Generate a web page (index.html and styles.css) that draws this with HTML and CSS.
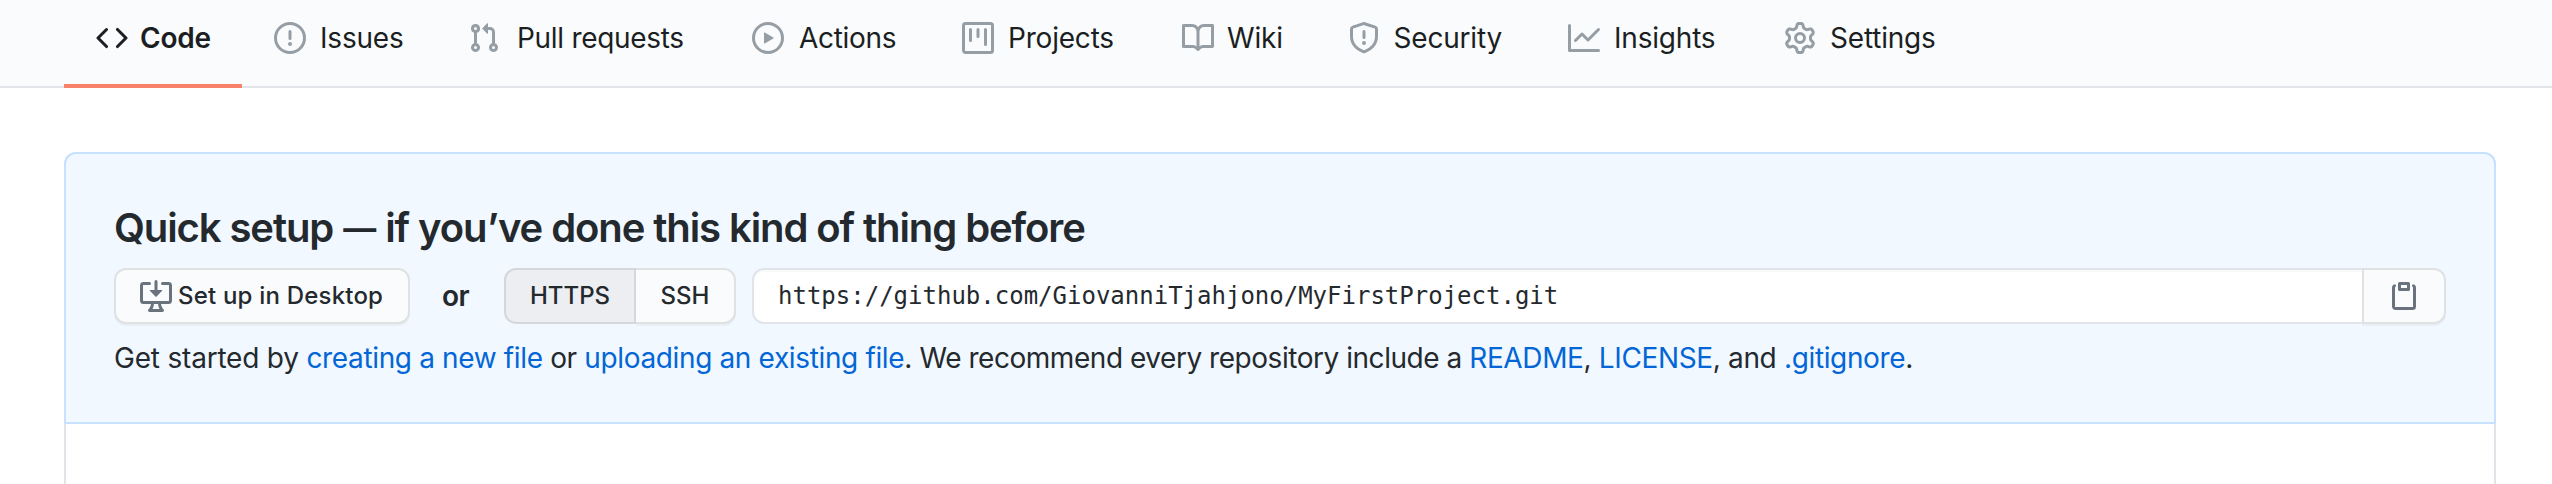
FILE: index.html
```html
<!DOCTYPE html>
<html lang="en">
<head>
<meta charset="utf-8">
<title>Quick setup</title>
<link rel="stylesheet" href="styles.css">
</head>
<body>
<nav class="tabs">
  <a class="tab tab-code selected"><svg class="icon" viewBox="0 0 16 16"><path fill-rule="evenodd" d="M4.72 3.22a.75.75 0 011.06 1.06L2.06 8l3.72 3.72a.75.75 0 11-1.06 1.06L.47 8.53a.75.75 0 010-1.06l4.25-4.25zm6.56 0a.75.75 0 10-1.06 1.06L13.94 8l-3.72 3.72a.75.75 0 101.06 1.06l4.25-4.25a.75.75 0 000-1.06l-4.25-4.25z"/></svg><span class="label">Code</span></a>
  <a class="tab tab-issues"><svg class="icon" viewBox="0 0 16 16"><path fill-rule="evenodd" d="M8 1.5a6.5 6.5 0 100 13 6.5 6.5 0 000-13zM0 8a8 8 0 1116 0A8 8 0 010 8zm9 3a1 1 0 11-2 0 1 1 0 012 0zm-.25-6.25a.75.75 0 00-1.5 0v3.5a.75.75 0 001.5 0v-3.5z"/></svg><span class="label">Issues</span></a>
  <a class="tab tab-pulls"><svg class="icon" viewBox="0 0 16 16"><path fill-rule="evenodd" d="M7.177 3.073L9.573.677A.25.25 0 0110 .854v4.792a.25.25 0 01-.427.177L7.177 3.427a.25.25 0 010-.354zM3.75 2.5a.75.75 0 100 1.5.75.75 0 000-1.5zm-2.25.75a2.25 2.25 0 113 2.122v5.256a2.251 2.251 0 11-1.5 0V5.372A2.25 2.25 0 011.5 3.25zM11 2.5h-1V4h1a1 1 0 011 1v5.628a2.251 2.251 0 101.5 0V5A2.5 2.5 0 0011 2.5zm1 10.25a.75.75 0 111.5 0 .75.75 0 01-1.5 0zM3.75 12a.75.75 0 100 1.5.75.75 0 000-1.5z"/></svg><span class="label">Pull requests</span></a>
  <a class="tab tab-actions"><svg class="icon" viewBox="0 0 16 16"><path fill-rule="evenodd" d="M1.5 8a6.5 6.5 0 1113 0 6.5 6.5 0 01-13 0zM8 0a8 8 0 100 16A8 8 0 008 0zM6.379 5.227A.25.25 0 006 5.442v5.117a.25.25 0 00.379.214l4.264-2.559a.25.25 0 000-.428L6.379 5.227z"/></svg><span class="label">Actions</span></a>
  <a class="tab tab-projects"><svg class="icon" viewBox="0 0 16 16"><path fill-rule="evenodd" d="M1.75 0A1.75 1.75 0 000 1.75v12.5C0 15.216.784 16 1.75 16h12.5A1.75 1.75 0 0016 14.25V1.75A1.75 1.75 0 0014.25 0H1.75zM1.5 1.75a.25.25 0 01.25-.25h12.5a.25.25 0 01.25.25v12.5a.25.25 0 01-.25.25H1.75a.25.25 0 01-.25-.25V1.75zM11.75 3a.75.75 0 00-.75.75v7.5a.75.75 0 001.5 0v-7.5a.75.75 0 00-.75-.75zm-8.25.75a.75.75 0 011.5 0v5.5a.75.75 0 01-1.5 0v-5.5zM8 3a.75.75 0 00-.75.75v3.5a.75.75 0 001.5 0v-3.5A.75.75 0 008 3z"/></svg><span class="label">Projects</span></a>
  <a class="tab tab-wiki"><svg class="icon" viewBox="0 0 16 16"><path fill-rule="evenodd" d="M0 1.75A.75.75 0 01.75 1h4.253c1.227 0 2.317.59 3 1.501A3.744 3.744 0 0111.006 1h4.245a.75.75 0 01.75.75v10.5a.75.75 0 01-.75.75h-4.507a2.25 2.25 0 00-1.591.659l-.622.621a.75.75 0 01-1.06 0l-.622-.621A2.25 2.25 0 005.258 13H.75a.75.75 0 01-.75-.75V1.75zm8.755 3a2.25 2.25 0 012.25-2.25H14.5v9h-3.757c-.71 0-1.4.201-1.992.572l.004-7.322zm-1.504 7.324l.004-5.073-.002-2.253A2.25 2.25 0 005.003 2.5H1.5v9h3.757a3.75 3.75 0 011.994.574z"/></svg><span class="label">Wiki</span></a>
  <a class="tab tab-security"><svg class="icon" viewBox="0 0 16 16"><path fill-rule="evenodd" d="M7.467.133a1.75 1.75 0 011.066 0l5.25 1.68A1.75 1.75 0 0115 3.48V7c0 1.566-.32 3.182-1.303 4.682-.983 1.498-2.585 2.813-5.032 3.855a1.7 1.7 0 01-1.33 0c-2.447-1.042-4.049-2.357-5.032-3.855C1.32 10.182 1 8.566 1 7V3.48a1.75 1.75 0 011.217-1.667l5.25-1.68zm.61 1.429a.25.25 0 00-.153 0l-5.25 1.68a.25.25 0 00-.174.238V7c0 1.358.275 2.666 1.057 3.86.784 1.194 2.121 2.34 4.366 3.297a.2.2 0 00.154 0c2.245-.956 3.582-2.104 4.366-3.298C13.225 9.666 13.5 8.36 13.5 7V3.48a.25.25 0 00-.174-.237l-5.25-1.68zM9 10.5a1 1 0 11-2 0 1 1 0 012 0zm-.25-5.75a.75.75 0 10-1.5 0v3a.75.75 0 001.5 0v-3z"/></svg><span class="label">Security</span></a>
  <a class="tab tab-insights"><svg class="icon" viewBox="0 0 16 16"><path fill-rule="evenodd" d="M1.5 1.75a.75.75 0 00-1.5 0v12.5c0 .414.336.75.75.75h14.5a.75.75 0 000-1.5H1.5V1.75zm14.28 2.53a.75.75 0 00-1.06-1.06L10 7.94 7.53 5.47a.75.75 0 00-1.06 0L3.22 8.72a.75.75 0 001.06 1.06L7 7.06l2.47 2.47a.75.75 0 001.06 0l5.25-5.25z"/></svg><span class="label">Insights</span></a>
  <a class="tab tab-settings"><svg class="icon" viewBox="0 0 16 16"><path fill-rule="evenodd" d="M7.429 1.525a6.593 6.593 0 011.142 0c.036.003.108.036.137.146l.289 1.105c.147.56.55.967.997 1.189.174.086.341.183.501.29.417.278.97.423 1.53.27l1.102-.303c.11-.03.175.016.195.046.219.31.41.641.573.989.014.031.022.11-.059.19l-.815.806c-.411.406-.562.957-.53 1.456a4.588 4.588 0 010 .582c-.032.499.119 1.05.53 1.456l.815.806c.08.08.073.159.059.19a6.494 6.494 0 01-.573.99c-.02.029-.086.074-.195.045l-1.103-.303c-.559-.153-1.112-.008-1.529.27-.16.107-.327.204-.5.29-.449.222-.851.628-.998 1.189l-.289 1.105c-.029.11-.101.143-.137.146a6.613 6.613 0 01-1.142 0c-.036-.003-.108-.037-.137-.146l-.289-1.105c-.147-.56-.55-.967-.997-1.189a4.502 4.502 0 01-.501-.29c-.417-.278-.97-.423-1.53-.27l-1.102.303c-.11.03-.175-.016-.195-.046a6.492 6.492 0 01-.573-.989c-.014-.031-.022-.11.059-.19l.815-.806c.411-.406.562-.957.53-1.456a4.587 4.587 0 010-.582c.032-.499-.119-1.05-.53-1.456l-.815-.806c-.08-.08-.073-.159-.059-.19a6.44 6.44 0 01.573-.99c.02-.029.086-.075.195-.045l1.103.303c.559.153 1.112.008 1.529-.27.16-.107.327-.204.5-.29.449-.222.851-.628.998-1.189l.289-1.105c.029-.11.101-.143.137-.146zM8 0c-.236 0-.47.01-.701.03-.743.065-1.29.615-1.458 1.261l-.29 1.106c-.017.066-.078.158-.211.224a5.994 5.994 0 00-.668.386c-.123.082-.233.09-.3.071L3.27 2.776c-.644-.177-1.392.02-1.82.63a7.977 7.977 0 00-.704 1.217c-.315.675-.111 1.422.363 1.891l.815.806c.05.048.098.147.088.294a6.084 6.084 0 000 .772c.01.147-.038.246-.088.294l-.815.806c-.474.469-.678 1.216-.363 1.891.2.428.436.835.704 1.218.428.609 1.176.806 1.82.63l1.103-.303c.066-.019.176-.011.299.071.213.143.436.272.668.386.133.066.194.158.212.224l.289 1.106c.169.646.715 1.196 1.458 1.26a8.094 8.094 0 001.402 0c.743-.064 1.29-.614 1.458-1.26l.29-1.106c.017-.066.078-.158.211-.224a5.98 5.98 0 00.668-.386c.123-.082.233-.09.3-.071l1.102.302c.644.177 1.392-.02 1.82-.63.268-.382.505-.789.704-1.217.315-.675.111-1.422-.364-1.891l-.814-.806c-.05-.048-.098-.147-.088-.294a6.1 6.1 0 000-.772c-.01-.147.039-.246.088-.294l.814-.806c.475-.469.679-1.216.364-1.891a7.992 7.992 0 00-.704-1.218c-.428-.609-1.176-.806-1.82-.63l-1.103.303c-.066.019-.176.011-.299-.071a5.991 5.991 0 00-.668-.386c-.133-.066-.194-.158-.212-.224L10.16 1.29C9.99.645 9.444.095 8.701.031A8.094 8.094 0 008 0zm1.5 8a1.5 1.5 0 11-3 0 1.5 1.5 0 013 0zM11 8a3 3 0 11-6 0 3 3 0 016 0z"/></svg><span class="label">Settings</span></a>
</nav>
<main class="box">
  <section class="setup">
    <h3 class="title">Quick setup <span class="dash">—</span> if you’ve done this kind of thing before</h3>
    <div class="controls">
      <button class="btn desktop"><svg class="icon" viewBox="0 0 16 16"><path d="M4.927 5.427l2.896 2.896a.25.25 0 00.354 0l2.896-2.896A.25.25 0 0010.896 5H8.75V.75a.75.75 0 10-1.5 0V5H5.104a.25.25 0 00-.177.427z"/><path d="M1.573 2.573a.25.25 0 00-.073.177v7.5a.25.25 0 00.25.25h12.5a.25.25 0 00.25-.25v-7.5a.25.25 0 00-.25-.25h-3a.75.75 0 110-1.5h3A1.75 1.75 0 0116 2.75v7.5A1.75 1.75 0 0114.25 12h-3.727c.099 1.041.52 1.872 1.292 2.757A.75.75 0 0111.25 16h-6.5a.75.75 0 01-.565-1.243c.772-.885 1.192-1.716 1.292-2.757H1.75A1.75 1.75 0 010 10.25v-7.5A1.75 1.75 0 011.75 1h3a.75.75 0 010 1.5h-3a.25.25 0 00-.177.073zM6.982 12a5.72 5.72 0 01-.765 2.5h3.566a5.72 5.72 0 01-.765-2.5H6.982z" fill-rule="evenodd"/></svg><span class="btn-label">Set up in Desktop</span></button>
      <strong class="or">or</strong>
      <div class="protocols"><button class="btn https"><span class="btn-label">HTTPS</span></button><button class="btn ssh"><span class="btn-label">SSH</span></button></div>
      <div class="clone"><div class="url">https://github.com/GiovanniTjahjono/MyFirstProject.git</div><button class="btn copy" aria-label="Copy"><svg class="icon" viewBox="0 0 16 16"><path fill-rule="evenodd" d="M5.75 1a.75.75 0 00-.75.75v3c0 .414.336.75.75.75h4.5a.75.75 0 00.75-.75v-3a.75.75 0 00-.75-.75h-4.5zm.75 3V2.5h3V4h-3zm-2.874-.467a.75.75 0 00-.752-1.298A1.75 1.75 0 002 3.75v9.5c0 .966.784 1.75 1.75 1.75h8.5A1.75 1.75 0 0014 13.25v-9.5a1.75 1.75 0 00-.874-1.515.75.75 0 10-.752 1.298.25.25 0 01.126.217v9.5a.25.25 0 01-.25.25h-8.5a.25.25 0 01-.25-.25v-9.5a.25.25 0 01.126-.217z"/></svg></button></div>
    </div>
    <p class="hint"><span class="lead">Get started by </span><a>creating a new file</a> or <a>uploading an existing file</a>. <span class="advice">We recommend every repository include a </span><a>README</a>, <a>LICENSE</a>, and <a>.gitignore</a>.</p>
  </section>
</main>
</body>
</html>
```
FILE: styles.css
```css
* { box-sizing: border-box; }
body {
  margin: 0;
  height: 484px;
  overflow: hidden;
  display: flex;
  flex-direction: column;
  background: #fff;
  color: #24292e;
  font-family: Inter, "Liberation Sans", sans-serif;
  font-size: 28px;
}
.icon { width: 32px; height: 32px; flex: none; fill: currentColor; }
.tabs {
  display: flex;
  flex: none;
  height: 88px;
  padding-left: 64px;
  background: #fafbfc;
  box-shadow: inset 0 -2px #e1e4e8;
}
.tab {
  display: flex;
  align-items: center;
  gap: 14px;
  flex: none;
  height: 88px;
  padding: 0 0 8px 32px;
  border-bottom: 4px solid transparent;
  color: #1b1f23;
  letter-spacing: -.2px;
  white-space: nowrap;
}
.tab .icon { color: #959da5; }
.tab.selected { border-bottom-color: #f9826c; font-weight: 600; }
.tab.selected .icon { color: #1b1f23; }
.tab-code { width: 178px; gap: 12px; }
.tab-issues { width: 194px; }
.tab-pulls { width: 284px; gap: 17px; letter-spacing: -.3px; }
.tab-actions { width: 210px; gap: 15px; letter-spacing: -.3px; }
.tab-projects { width: 220px; }
.tab-wiki { width: 166px; gap: 13px; }
.tab-security { width: 220px; gap: 13.5px; }
.tab-insights { width: 216px; }
.tab-settings { width: 216px; }

.box {
  flex: 1;
  margin: 64px 56px 0 64px;
  border: 2px solid #e1e4e8;
  border-width: 0 2px;
  border-radius: 12px 12px 0 0;
}
.setup {
  height: 272px;
  margin: 0 -2px;
  padding: 46px 48px;
  background: #f1f8ff;
  border: 2px solid #c8e1ff;
  border-radius: 12px 12px 0 0;
}
.title { margin: 0; height: 68px; font-size: 40px; line-height: 56px; font-weight: 600; letter-spacing: -1.09px; white-space: nowrap; }
.dash { margin: 0 1px; font-size: 33px; font-weight: 700; line-height: 1; vertical-align: 2px; }
.controls { display: flex; height: 56px; }
.btn {
  display: flex;
  align-items: center;
  justify-content: center;
  height: 56px;
  padding: 0;
  font: 500 24px Inter, sans-serif;
  color: #24292e;
  background: #fafbfc;
  border: 2px solid #dfe1e3;
  border-radius: 12px;
  box-shadow: 0 2px 0 rgba(27,31,35,.04);
  white-space: nowrap;
}
.btn .icon { color: #6a737d; }
.btn-label { padding-bottom: 1px; }
.desktop { width: 296px; gap: 6px; justify-content: flex-start; padding-left: 24px; letter-spacing: .2px; }
.or { width: 94px; padding-right: 3px; line-height: 56px; text-align: center; font-weight: 600; letter-spacing: -.5px; }
.protocols { display: flex; width: 232px; }
.https { width: 132px; border-radius: 12px 0 0 12px; background: #edeef2; border-color: #d5d7da; box-shadow: none; }
.ssh { width: 100px; border-left: 0; border-radius: 0 12px 12px 0; }
.clone { display: flex; flex: 1; margin-left: 16px; }
.url {
  flex: 1;
  padding-left: 24px;
  font: 24px/52px "DejaVu Sans Mono", monospace;
  background: #fff;
  border: 2px solid #e1e4e8;
  border-right: 0;
  border-radius: 12px 0 0 12px;
  box-shadow: inset 0 2px 0 rgba(225,228,232,.2);
}
.copy { width: 84px; border-radius: 0 12px 12px 0; }
.hint { margin: 13px 0 0; line-height: 42px; letter-spacing: -.357px; white-space: nowrap; }
.lead { letter-spacing: -.2px; }
.advice { letter-spacing: -.46px; }
.hint a { color: #0366d6; }
```
